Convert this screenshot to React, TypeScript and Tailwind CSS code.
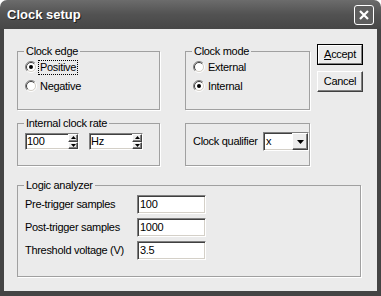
import React from "react"

const raised =
  "bg-[#ececec] border border-t-white border-l-white border-b-[#404040] border-r-[#404040] shadow-[inset_-1px_-1px_0_#808080]"
const sunken =
  "bg-white border border-t-[#808080] border-l-[#808080] border-b-white border-r-white shadow-[inset_1px_1px_0_#404040,inset_-1px_-1px_0_#d4d0c8]"

function Radio({ checked }: { checked?: boolean }) {
  return (
    <svg width="12" height="12" viewBox="0 0 12 12" className="shrink-0">
      <circle cx="6" cy="6" r="4.5" fill="#fff" />
      <path d="M2.1 9.9 A5.5 5.5 0 0 1 9.9 2.1" fill="none" stroke="#808080" />
      <path d="M9.9 2.1 A5.5 5.5 0 0 1 2.1 9.9" fill="none" stroke="#fff" />
      <path d="M2.8 9.2 A4.5 4.5 0 0 1 9.2 2.8" fill="none" stroke="#404040" />
      <path d="M9.2 2.8 A4.5 4.5 0 0 1 2.8 9.2" fill="none" stroke="#d4d0c8" />
      {checked && <circle cx="6" cy="6" r="2" fill="#000" />}
    </svg>
  )
}

function Arrow({ down }: { down?: boolean }) {
  return (
    <svg width="5" height="3" viewBox="0 0 5 3">
      <path d={down ? "M0 0 H5 L2.5 3Z" : "M2.5 0 L5 3 H0Z"} fill="#000" />
    </svg>
  )
}

function Spinner({ value, width }: { value: string; width: string }) {
  return (
    <div className={`flex h-[17px] ${sunken} ${width}`}>
      <div className="flex-1 flex items-center pl-[1px]">{value}</div>
      <div className="flex flex-col w-[10px]">
        <div className={`flex-1 flex items-center justify-center ${raised}`}>
          <Arrow />
        </div>
        <div className={`flex-1 flex items-center justify-center ${raised}`}>
          <Arrow down />
        </div>
      </div>
    </div>
  )
}

function Group({
  title,
  className,
  children,
}: {
  title: string
  className?: string
  children: React.ReactNode
}) {
  return (
    <fieldset className={`border border-[#a0a0a0] shadow-[1px_1px_0_#fff] pl-[7px] ${className ?? ""}`}>
      <legend className="ml-[-1px] px-[2px] leading-[14px]">{title}</legend>
      {children}
    </fieldset>
  )
}

export default function App() {
  return (
    <div className="w-[381px] h-[296px] bg-white flex flex-col font-['Liberation_Sans',Arial,sans-serif] text-[11px] tracking-[-0.3px] text-black">
      {/* Title bar */}
      <div className="h-[29px] shrink-0 rounded-t-[7px] bg-linear-to-b from-[#6c6c6c] via-[#525252] to-[#474747] flex items-center pl-[7px] pr-[7px]">
        <span className="text-white font-bold text-[13px] tracking-[0px] [text-shadow:1px_1px_0_#202020]">
          Clock setup
        </span>
        <div className="ml-auto w-[20px] h-[20px] rounded-[3px] border border-white bg-[#5e5e5e] flex items-center justify-center">
          <svg width="12" height="12" viewBox="0 0 12 12">
            <path d="M2 2 L10 10 M10 2 L2 10" stroke="#fff" strokeWidth="2.2" />
          </svg>
        </div>
      </div>

      {/* Body */}
      <div className="flex-1 bg-[#ebebeb] border-l-4 border-r-4 border-b-[5px] border-[#444444] pl-[13px] pt-[15px]">
        <div className="flex">
          {/* Left column */}
          <div className="w-[143px] flex flex-col">
            <Group title="Clock edge" className="h-[66px]">
              <div className="flex flex-col gap-[3px] mt-[1px]">
                <div className="flex items-center h-[16px] gap-[1px]">
                  <Radio checked />
                  <span className="border border-dotted border-black px-[1px] leading-[13px]">Positive</span>
                </div>
                <div className="flex items-center h-[16px] gap-[3px]">
                  <Radio />
                  <span>Negative</span>
                </div>
              </div>
            </Group>
            <Group title="Internal clock rate" className="h-[50px] mt-[6px]">
              <div className="flex gap-[10px] mt-[3px]">
                <Spinner value="100" width="w-[54px]" />
                <Spinner value="Hz" width="w-[54px]" />
              </div>
            </Group>
          </div>

          {/* Middle column */}
          <div className="w-[125px] ml-[25px] flex flex-col">
            <Group title="Clock mode" className="h-[66px]">
              <div className="flex flex-col gap-[3px] mt-[1px]">
                <div className="flex items-center h-[16px] gap-[3px]">
                  <Radio />
                  <span>External</span>
                </div>
                <div className="flex items-center h-[16px] gap-[3px]">
                  <Radio checked />
                  <span>Internal</span>
                </div>
              </div>
            </Group>
            <div className="mt-[13px] h-[43px] border border-[#a0a0a0] shadow-[1px_1px_0_#fff] pl-[7px] pt-[8px] flex items-start">
              <span className="leading-[18px]">Clock qualifier</span>
              <div className={`ml-auto w-[46px] h-[19px] flex ${sunken}`}>
                <div className="flex-1 flex items-center pl-[2px]">x</div>
                <div className={`w-[16px] flex items-center justify-center ${raised}`}>
                  <svg width="7" height="4" viewBox="0 0 7 4">
                    <path d="M0 0 H7 L3.5 4Z" fill="#000" />
                  </svg>
                </div>
              </div>
            </div>
          </div>

          {/* Buttons */}
          <div className="ml-[7px] flex flex-col gap-[6px]">
            <div className="w-[46px] h-[21px] border border-black flex">
              <div className="flex-1 flex items-center justify-center border border-t-white border-l-white border-b-[#808080] border-r-[#808080] bg-[#ececec]">
                <span>
                  <span className="underline underline-offset-1">A</span>ccept
                </span>
              </div>
            </div>
            <div className={`w-[46px] h-[21px] flex items-center justify-center ${raised}`}>
              Cancel
            </div>
          </div>
        </div>

        {/* Logic analyzer */}
        <Group title="Logic analyzer" className="w-[344px] h-[99px] mt-[12px]">
          <div className="flex flex-col gap-[4px] mt-[3px]">
            {[
              ["Pre-trigger samples", "100"],
              ["Post-trigger samples", "1000"],
              ["Threshold voltage (V)", "3.5"],
            ].map(([label, value]) => (
              <div key={label} className="flex items-center h-[19px]">
                <span className="w-[112px]">{label}</span>
                <div className={`w-[69px] h-[19px] flex items-center pl-[2px] ${sunken}`}>{value}</div>
              </div>
            ))}
          </div>
        </Group>
      </div>
    </div>
  )
}
